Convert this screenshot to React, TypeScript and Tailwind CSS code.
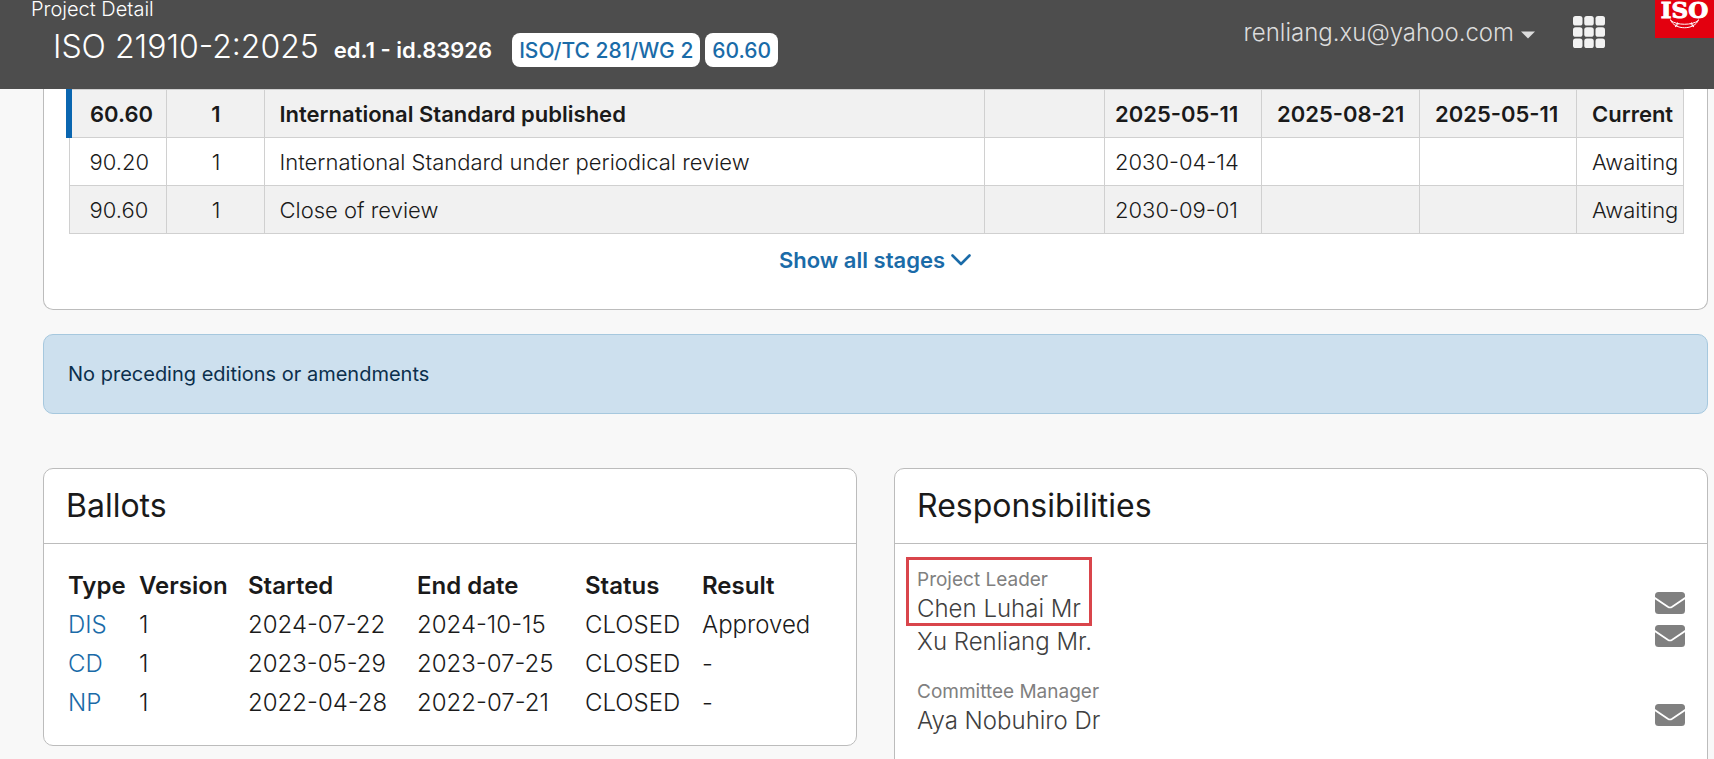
const stages = [
  { code: '60.60', version: '1', title: 'International Standard published', dates: ['2025-05-11', '2025-08-21', '2025-05-11'], status: 'Current', current: true },
  { code: '90.20', version: '1', title: 'International Standard under periodical review', dates: ['2030-04-14', '', ''], status: 'Awaiting', current: false },
  { code: '90.60', version: '1', title: 'Close of review', dates: ['2030-09-01', '', ''], status: 'Awaiting', current: false },
]

const ballots = [
  { type: 'DIS', version: '1', started: '2024-07-22', ended: '2024-10-15', status: 'CLOSED', result: 'Approved' },
  { type: 'CD', version: '1', started: '2023-05-29', ended: '2023-07-25', status: 'CLOSED', result: '-' },
  { type: 'NP', version: '1', started: '2022-04-28', ended: '2022-07-21', status: 'CLOSED', result: '-' },
]

function GridIcon() {
  return (
    <svg width="32" height="32" viewBox="0 0 32 32" fill="#f2f2f2" aria-hidden="true">
      {[0, 11.25, 22.5].map((y) =>
        [0, 11.25, 22.5].map((x) => (
          <rect key={`${x}-${y}`} x={x} y={y} width="9.5" height="9.5" rx="2.6" />
        )),
      )}
    </svg>
  )
}

function IsoLogo() {
  return (
    <svg width="59" height="38" viewBox="0 0 59 38" role="img" aria-label="ISO">
      <rect width="59" height="38" fill="#e3000f" />
      <text
        x="29.5"
        y="17.5"
        textAnchor="middle"
        fontFamily="'DejaVu Serif', serif"
        fontWeight="700"
        fontSize="23"
        fill="#fff"
        stroke="#fff"
        strokeWidth="1"
      >
        ISO
      </text>
      <g fill="none" stroke="#fff" strokeWidth="1">
        <path d="M15.500 19.500C19 30.500 40 30.500 43.500 19.500" />
        <path d="M15.500 20.500C22 25.500 37 25.500 43.500 20.500" />
        <path d="M23 22.500C20.500 24 21 26 22.500 26.500M36 22.500C38.500 24 38 26 36.500 26.500" />
        <path d="M23.500 24L20 27M35.500 24L39 27" />
      </g>
    </svg>
  )
}

function EnvelopeIcon() {
  return (
    <svg width="30" height="22" viewBox="0 0 30 22" aria-hidden="true">
      <rect width="30" height="22" rx="3.5" fill="#808080" />
      <path d="M-0.500 5.800L12.800 14.800Q15 16.200 17.200 14.800L30.500 5.800" fill="none" stroke="#fff" strokeWidth="1.7" />
    </svg>
  )
}

function Person({ name }: { name: string }) {
  return (
    <div className="flex h-[33px] items-start justify-between text-2xl leading-[34px] font-[350] text-[#404040]">
      <span>{name}</span>
      <button type="button" aria-label={`Email ${name}`}>
        <EnvelopeIcon />
      </button>
    </div>
  )
}

function Header() {
  return (
    <header className="flex h-[89px] items-start bg-[#4d4d4d] text-white">
      <div className="flex flex-col">
        <div className="h-5 pl-[31px] text-xl leading-[18px] font-[350]">Project Detail</div>
        <div className="mt-[7px] flex items-baseline pl-[53px] leading-10">
          <h1 className="text-[32px] font-[350]">ISO 21910-2:2025</h1>
          <span className="ml-[15px] text-[22px] font-semibold">ed.1 - id.83926</span>
          <a href="#committee" className="ml-5 rounded-lg bg-white px-[7px] pt-0.5 text-[21px] leading-8 font-medium text-[#1a6ba8]">
            ISO/TC 281/WG 2
          </a>
          <a href="#stage" className="ml-[5px] rounded-lg bg-white px-[7px] pt-0.5 text-[21px] leading-8 font-medium text-[#1a6ba8]">
            60.60
          </a>
        </div>
      </div>
      <div className="ml-auto flex items-start">
        <button type="button" className="mt-[17px] flex items-center text-2xl leading-8 font-[350] text-[#dcdcdc]">
          renliang.xu@yahoo.com
          <svg width="14" height="8" viewBox="0 0 14 8" className="ml-[7px] mt-1" fill="currentColor" aria-hidden="true">
            <path d="M0 0.500H14L7 7.500Z" />
          </svg>
        </button>
        <button type="button" aria-label="Applications" className="mt-4 ml-[38px]">
          <GridIcon />
        </button>
        <a href="#home" className="ml-[50px]">
          <IsoLogo />
        </a>
      </div>
    </header>
  )
}

function StageTable() {
  return (
    <table className="w-full table-fixed border-collapse text-[22px] leading-[30px]">
      <colgroup>
        <col className="w-[97px]" />
        <col className="w-[98px]" />
        <col />
        <col className="w-[120px]" />
        <col className="w-[157px]" />
        <col className="w-[158px]" />
        <col className="w-[157px]" />
        <col className="w-[107px]" />
      </colgroup>
      <tbody>
        {stages.map((stage) => (
          <tr
            key={stage.code}
            className={`h-12 *:border *:border-[#d0d0d0] ${stage.current ? 'bg-[#f1f1f1] font-semibold' : 'font-[350] even:bg-white odd:bg-[#f1f1f1]'}`}
          >
            <td className={stage.current ? 'border-l-[6px]! border-l-[#0a66b0]! pl-[18px]' : 'pl-5'}>{stage.code}</td>
            <td className="pl-0.5 text-center">{stage.version}</td>
            <td className="pl-[15px]">{stage.title}</td>
            <td />
            <td className="pl-2.5">{stage.dates[0]}</td>
            <td className="pl-[15px]">{stage.dates[1]}</td>
            <td className="pl-[15px]">{stage.dates[2]}</td>
            <td className="pl-[15px]">{stage.status}</td>
          </tr>
        ))}
      </tbody>
    </table>
  )
}

function Ballots() {
  return (
    <section className="self-start rounded-[10px] border border-[#bcbcbc] bg-white">
      <h2 className="border-b border-[#bcbcbc] px-[22px] py-[17px] text-[32px] leading-10">Ballots</h2>
      <table className="mx-6 mt-[22px] mb-[23px] table-fixed text-left text-2xl leading-[39px] font-[350]">
        <thead>
          <tr className="*:p-0 *:font-semibold">
            <th className="w-[71px]">Type</th>
            <th className="w-[109px]">Version</th>
            <th className="w-[169px]">Started</th>
            <th className="w-[168px]">End date</th>
            <th className="w-[117px]">Status</th>
            <th className="w-[120px]">Result</th>
          </tr>
        </thead>
        <tbody>
          {ballots.map((ballot) => (
            <tr key={ballot.type}>
              <td>
                <a href="#ballot" className="text-[#1a6ba8]">{ballot.type}</a>
              </td>
              <td>{ballot.version}</td>
              <td>{ballot.started}</td>
              <td>{ballot.ended}</td>
              <td>{ballot.status}</td>
              <td>{ballot.result}</td>
            </tr>
          ))}
        </tbody>
      </table>
    </section>
  )
}

function Responsibilities() {
  return (
    <section className="rounded-[10px] border border-[#bcbcbc] bg-white">
      <h2 className="border-b border-[#bcbcbc] px-[22px] py-[17px] text-[32px] leading-10">Responsibilities</h2>
      <div className="px-[22px] pt-6 pb-8">
        <div className="relative">
          <div className="text-[19px] leading-6 text-[#808080]">Project Leader</div>
          <Person name="Chen Luhai Mr" />
          <div className="pointer-events-none absolute -top-[11px] -left-[11px] h-[69px] w-[186px] border-3 border-[#d9454b]" />
        </div>
        <Person name="Xu Renliang Mr." />
        <div className="mt-[22px] text-[19px] leading-6 text-[#808080]">Committee Manager</div>
        <Person name="Aya Nobuhiro Dr" />
      </div>
    </section>
  )
}

export default function App() {
  return (
    <div className="h-screen overflow-hidden bg-[#f8f8f8] font-['Inter',sans-serif] text-[#1a1a1a]">
      <Header />
      <main className="pr-1.5 pl-[43px]">
        <section className="rounded-b-[10px] border border-t-0 border-[#bcbcbc] bg-white pr-[23px] pb-[31px] pl-[22px]">
          <StageTable />
          <div className="mt-2 flex justify-center">
            <button type="button" className="flex items-center gap-1.5 text-[22px] leading-9 font-semibold text-[#1a6ba8]">
              Show all stages
              <svg width="20" height="12" viewBox="0 0 20 12" fill="none" stroke="currentColor" strokeWidth="2.6" strokeLinecap="round" strokeLinejoin="round" aria-hidden="true">
                <path d="M1.500 1.500L10 10L18.500 1.500" />
              </svg>
            </button>
          </div>
        </section>

        <div role="status" className="mt-6 rounded-[10px] border border-[#a6c8de] bg-[#cde0ee] px-6 py-[23px] text-xl leading-8 text-[#0b2f4c]">
          No preceding editions or amendments
        </div>

        <div className="mt-[54px] grid grid-cols-2 gap-[37px]">
          <Ballots />
          <Responsibilities />
        </div>
      </main>
    </div>
  )
}
